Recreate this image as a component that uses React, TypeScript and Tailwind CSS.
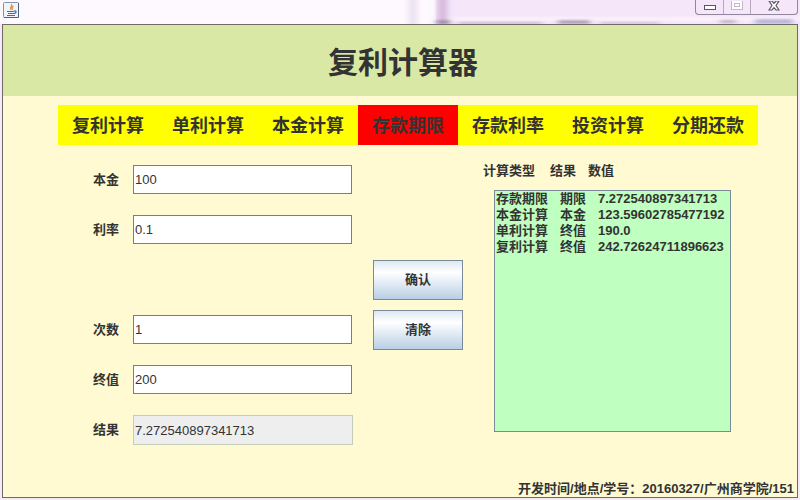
import { useState } from 'react';

const tabs = ['复利计算', '单利计算', '本金计算', '存款期限', '存款利率', '投资计算', '分期还款'];

const fields = [
  { id: 'principal', label: '本金', value: '100' },
  { id: 'rate', label: '利率', value: '0.1' },
  { id: 'times', label: '次数', value: '1', spaced: true },
  { id: 'final', label: '终值', value: '200' },
];

const records = [
  { type: '存款期限', result: '期限', value: '7.272540897341713' },
  { type: '本金计算', result: '本金', value: '123.59602785477192' },
  { type: '单利计算', result: '终值', value: '190.0' },
  { type: '复利计算', result: '终值', value: '242.72624711896623' },
];

function JavaIcon() {
  return (
    <svg width="16" height="16" viewBox="0 0 16 16" fill="none">
      <rect x="0.5" y="0.5" width="15" height="15" rx="1" fill="#f1f4f8" stroke="#8093a8" />
      <path d="M1 15.5h14.5V1" stroke="#476582" />
      <path d="M8.500 2c1.500 2-2.500 3-.5 6M10.500 4c-2 1-2 2-1 4" stroke="#e08a48" strokeWidth="1.200" />
      <path d="M4 9.500h7M5 11.500h6M4 13.500h8M11 9c3-.5 2.500 2 0 2.500" stroke="#3f7099" strokeWidth="1.200" />
    </svg>
  );
}

// Desktop seen through the frosted title bar
function GlassBackdrop() {
  return (
    <svg className="absolute inset-0 h-full w-full" viewBox="0 0 800 24" preserveAspectRatio="none" aria-hidden="true">
      <defs>
        <filter id="frost" x="-50%" y="-50%" width="200%" height="200%">
          <feGaussianBlur stdDeviation="3 1" />
        </filter>
      </defs>
      <rect width="800" height="24" fill="#fdf9fe" />
      <rect x="436" width="364" height="24" fill="#f5e6fa" />
      <g filter="url(#frost)">
        <rect x="409" y="-4" width="8" height="30" fill="#eadff0" />
        <rect x="438" y="-4" width="9" height="32" fill="#d3b6da" />
        <rect x="452" y="17" width="360" height="4" fill="#fbf0fb" />
        <rect x="436" y="20" width="14" height="4" fill="#a58fb0" />
        <rect x="458" y="22" width="84" height="2" fill="#c5b3cf" />
        <rect x="558" y="20" width="32" height="4" fill="#b3a0bd" />
        <rect x="600" y="22" width="60" height="2" fill="#cdbdd5" />
        <rect x="720" y="20" width="16" height="3" fill="#bfaec9" />
        <rect x="755" y="19" width="38" height="5" fill="#bcb8dc" />
      </g>
    </svg>
  );
}

function TitleBar() {
  return (
    <header className="relative h-6 overflow-hidden">
      <GlassBackdrop />
      <div className="relative flex items-start justify-between pr-[2px] pl-[3px]">
        <div className="pt-[2px]">
          <JavaIcon />
        </div>
        <div className="flex h-[15px] rounded-b-[4px] border border-t-0 border-[#91869b] text-[#5b5665]">
          <button aria-label="最小化" className="flex w-7 items-center justify-center border-r border-[#b5a8bc]">
            <svg width="12" height="12" viewBox="0 0 12 12">
              <rect x="0.5" y="4.500" width="11" height="4" fill="#fff" stroke="currentColor" />
            </svg>
          </button>
          <button aria-label="最大化" className="flex w-[27px] items-center justify-center border-r border-[#b5a8bc] text-[#c2b8c7]" disabled>
            <svg width="12" height="12" viewBox="0 0 12 12" fill="#fff" stroke="currentColor">
              <rect x="0.5" y="-0.5" width="11" height="9" />
              <rect x="3.500" y="2.500" width="5" height="3" />
            </svg>
          </button>
          <button aria-label="关闭" className="flex w-[46px] items-center justify-center">
            <svg width="12" height="12" viewBox="0 0 12 12" fill="#fff" stroke="currentColor" strokeWidth="1.200">
              <path d="M1 0h3l2 2.300L8 0h3L8 4.500 11 9H8L6 6.700 4 9H1l3-4.500z" />
            </svg>
          </button>
        </div>
      </div>
    </header>
  );
}

export default function App() {
  const [active, setActive] = useState('存款期限');
  const [values, setValues] = useState(() => Object.fromEntries(fields.map(f => [f.id, f.value])));

  const clear = () => setValues(Object.fromEntries(fields.map(f => [f.id, ''])));

  return (
    <div className="flex min-h-screen flex-col bg-[#f6eafa] font-['Liberation_Sans','Noto_Sans_CJK_SC',sans-serif] text-[13px] text-[#333333]">
      <TitleBar />

      <main className="mx-[2px] mb-[2px] flex flex-1 flex-col border border-[#6f6a68] bg-[#fffad2]">
        <h1 className="flex h-[71px] items-center justify-center bg-[#d9e8a5] pt-1 pl-1.5 text-[30px] font-bold">复利计算器</h1>

        <nav className="mt-[9px] mr-[39px] ml-[55px] flex bg-[#ffff00]">
          {tabs.map(tab => (
            <button
              key={tab}
              onClick={() => setActive(tab)}
              className={`h-10 flex-1 pt-0.5 text-lg font-bold ${tab === active ? 'bg-[#ff0000]' : ''}`}
            >
              {tab}
            </button>
          ))}
        </nav>

        <div className="flex flex-1 gap-5 pt-5 pr-[66px] pl-[90px]">
          <form className="flex flex-[1_1_260px] flex-col gap-5">
            {fields.map(f => (
              <div key={f.id} className={`flex h-[30px] items-start pr-px ${f.spaced ? 'mt-[50px]' : ''}`}>
                <label htmlFor={f.id} className="w-10 leading-[30px] font-bold">{f.label}</label>
                <input
                  id={f.id}
                  value={values[f.id]}
                  onChange={e => setValues({ ...values, [f.id]: e.target.value })}
                  className="h-[29px] min-w-0 flex-1 border border-[#7a8078] bg-white px-px"
                />
              </div>
            ))}
            <div className="flex h-[30px] items-start">
              <label htmlFor="result" className="w-10 leading-[30px] font-bold">结果</label>
              <input
                id="result"
                readOnly
                value="7.272540897341713"
                className="h-[30px] min-w-0 flex-1 border border-[#c3ccb9] bg-[#eeeeee] px-px"
              />
            </div>
          </form>

          <div className="flex w-[90px] shrink-0 flex-col gap-[10px] pt-[95px]">
            <button className="h-10 border border-[#7a8a99] bg-linear-to-b from-[#dde8f3] via-white via-30% to-[#b8cfe5] font-bold">
              确认
            </button>
            <button onClick={clear} className="h-10 border border-[#7a8a99] bg-linear-to-b from-[#dde8f3] via-white via-30% to-[#b8cfe5] font-bold">
              清除
            </button>
          </div>

          <section className="flex-[1_1_248px] font-bold">
            <div className="flex h-[25px] leading-3">
              <span className="w-[67px]">计算类型</span>
              <span className="w-[38px]">结果</span>
              <span>数值</span>
            </div>
            <div className="ml-[11px] h-[242px] border border-[#7a8a99] bg-[#bfffbf] px-px">
              <table className="leading-4">
                <tbody>
                  {records.map(r => (
                    <tr key={r.type}>
                      <td className="w-16 p-0">{r.type}</td>
                      <td className="w-[38px] p-0">{r.result}</td>
                      <td className="p-0">{r.value}</td>
                    </tr>
                  ))}
                </tbody>
              </table>
            </div>
          </section>
        </div>

        <footer className="pr-[3px] text-right leading-4 font-bold">开发时间/地点/学号：20160327/广州商学院/151</footer>
      </main>
    </div>
  );
}
